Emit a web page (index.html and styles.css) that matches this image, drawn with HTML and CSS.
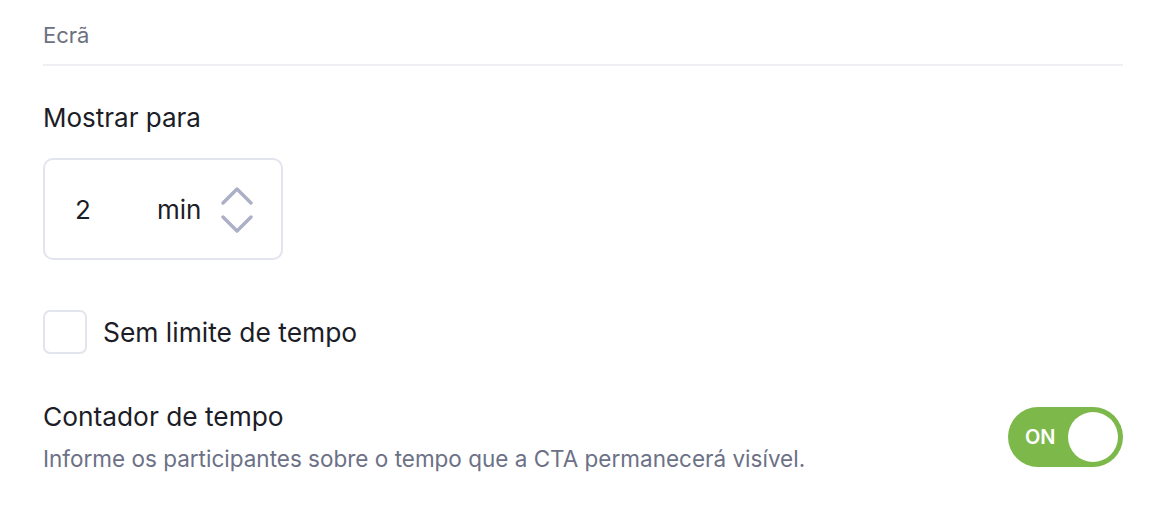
FILE: index.html
```html
<!DOCTYPE html>
<html lang="pt">
<head>
<meta charset="utf-8">
<link rel="stylesheet" href="styles.css">
</head>
<body>
<div class="panel">
  <div class="section-head">Ecrã</div>
  <div class="field">
    <div class="field-label">Mostrar para</div>
    <div class="duration">
      <span class="duration-value">2</span>
      <span class="duration-unit">min</span>
      <span class="stepper">
        <svg width="32" height="48" viewBox="0 0 32 48" fill="none" stroke="#acb0c6" stroke-width="3.4" stroke-linecap="round" stroke-linejoin="round">
          <path d="M2 17 L16 3 L30 17"/>
          <path d="M2 31 L16 45 L30 31"/>
        </svg>
      </span>
    </div>
  </div>
  <label class="check-row">
    <span class="checkbox"></span>
    <span class="check-label">Sem limite de tempo</span>
  </label>
  <div class="toggle-row">
    <div class="toggle-text">
      <div class="toggle-title">Contador de tempo</div>
      <div class="toggle-desc">Informe os participantes sobre o tempo que a CTA permanecerá visível.</div>
    </div>
    <div class="switch">
      <span class="switch-label">ON</span>
      <span class="switch-knob"></span>
    </div>
  </div>
</div>
</body>
</html>
```

FILE: styles.css
```css
* { box-sizing: border-box; }
html, body { margin: 0; padding: 0; background: #ffffff; }
body { font-family: Inter, Roboto, "Liberation Sans", sans-serif; color: #1c1d27; }

.panel {
  width: 1080px;
  margin-left: 43px;
  padding-top: 20px;
}

.section-head {
  font-size: 22px;
  line-height: 30px;
  color: #6c7080;
  padding-bottom: 14px;
  border-bottom: 2px solid #efeff3;
}

.field { padding-top: 34px; }

.field-label {
  font-size: 26px;
  line-height: 36px;
  color: #1c1d27;
}

.duration {
  margin-top: 22px;
  width: 240px;
  height: 102px;
  border: 2px solid #e3e5ee;
  border-radius: 10px;
  display: flex;
  align-items: center;
  padding-left: 30px;
}

.duration-value {
  font-size: 26px;
  width: 82px;
  color: #1c1d27;
}

.duration-unit {
  font-size: 26px;
  color: #1c1d27;
}

.stepper {
  display: flex;
  margin-left: 20px;
  margin-top: 2px;
}

.check-row {
  margin-top: 50px;
  display: flex;
  align-items: center;
  gap: 16px;
}

.checkbox {
  width: 44px;
  height: 44px;
  border: 2px solid #e3e5ee;
  border-radius: 7px;
}

.check-label {
  font-size: 26.4px;
  color: #1c1d27;
}

.toggle-row {
  margin-top: 46px;
  display: flex;
  justify-content: space-between;
  align-items: center;
}

.toggle-title {
  font-size: 26.3px;
  line-height: 34px;
  color: #1c1d27;
}

.toggle-desc {
  margin-top: 11px;
  font-size: 22.5px;
  line-height: 28px;
  color: #6c7186;
}

.switch {
  width: 115px;
  height: 60px;
  border-radius: 30px;
  background: #7db84b;
  display: flex;
  align-items: center;
  justify-content: space-between;
  padding: 0 5px 0 17px;
  margin-top: 1px;
}

.switch-label {
  color: #ffffff;
  font-size: 20px;
  font-weight: 600;
}

.switch-knob {
  width: 50px;
  height: 50px;
  border-radius: 50%;
  background: #ffffff;
}
```
